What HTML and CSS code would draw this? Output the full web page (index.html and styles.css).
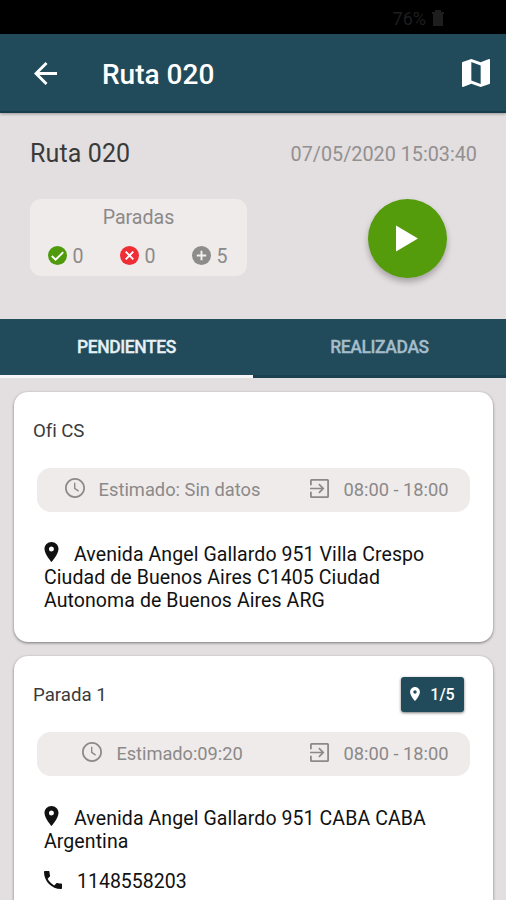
FILE: index.html
```html
<!DOCTYPE html>
<html lang="es">
<head>
<meta charset="utf-8">
<title>Ruta 020</title>
<link rel="stylesheet" href="styles.css">
</head>
<body>
<svg class="sprite" aria-hidden="true">
  <symbol id="pin" viewBox="5 2 14 20"><path fill-rule="evenodd" d="M12 2C8.13 2 5 5.13 5 9c0 5.25 7 13 7 13s7-7.750 7-13c0-3.870-3.130-7-7-7zm0 9.500a2.500 2.500 0 1 1 0-5 2.500 2.500 0 0 1 0 5z"/></symbol>
  <symbol id="clock" viewBox="2 2 20 20"><path d="M11.990 2C6.470 2 2 6.480 2 12s4.470 10 9.990 10C17.520 22 22 17.520 22 12S17.520 2 11.990 2zM12 20.300a8.300 8.300 0 1 1 0-16.600 8.300 8.300 0 0 1 0 16.600zm.4-13.500H11v6l4.200 2.900.8-1.150-3.600-2.500z"/></symbol>
  <symbol id="enter" viewBox="3 3 18 18"><path d="M10.900 15.600L12 16.700l4.700-4.700L12 7.300l-1.100 1.100 2.800 2.800H3v1.600h10.700zM19.500 3h-15A1.500 1.500 0 0 0 3 4.500V9h1.700V4.700h14.600v14.600H4.700V15H3v4.500A1.500 1.500 0 0 0 4.500 21h15a1.500 1.500 0 0 0 1.500-1.500v-15A1.500 1.500 0 0 0 19.500 3z"/></symbol>
</svg>

<div class="status"><span>76%</span><svg width="14" height="18" viewBox="0 0 14 18"><path d="M4 1h6v2h3v2h-1v12H2V5H1V3h3z"/></svg></div>

<header class="appbar">
  <svg class="back" viewBox="4 4 16 16"><path d="M20 11H7.830l5.590-5.590L12 4l-8 8 8 8 1.410-1.410L7.830 13H20v-2z"/></svg>
  <h1>Ruta 020</h1>
  <svg class="map" viewBox="3 3 18 18"><path d="M20.500 3l-.160.030L15 5.100 9 3 3.360 4.900c-.210.070-.360.250-.360.480V20.500c0 .280.220.500.500.500l.160-.030L9 18.900l6 2.100 5.640-1.900c.210-.070.360-.250.360-.480V3.500c0-.280-.220-.500-.500-.500zM15 19l-6-2.110V5l6 2.110V19z"/></svg>
</header>

<section class="summary">
  <div class="summary-head">
    <h2>Ruta 020</h2>
    <time>07/05/2020 15:03:40</time>
  </div>
  <div class="summary-body">
    <div class="stops">
      <div class="stops-title">Paradas</div>
      <div class="counts">
        <span><svg viewBox="0 0 20 20"><circle cx="10" cy="10" r="10" fill="#4f9b0b"/><path d="M4 10.500l4 4 8-8" stroke="#fff" stroke-width="2" fill="none"/></svg>0</span>
        <span><svg viewBox="0 0 20 20"><circle cx="10" cy="10" r="10" fill="#f02c34"/><path d="M6 6l8 8M14 6l-8 8" stroke="#fff" stroke-width="2" fill="none"/></svg>0</span>
        <span><svg viewBox="0 0 20 20"><circle cx="10" cy="10" r="10" fill="#8d8b8b"/><path d="M10 5v10M5 10h10" stroke="#f3f1f0" stroke-width="2" fill="none"/></svg>5</span>
      </div>
    </div>
    <div class="play"><svg viewBox="0 0 22 26"><path d="M0 0l22 13L0 26z"/></svg></div>
  </div>
</section>

<nav class="tabs">
  <div class="tab active">PENDIENTES</div>
  <div class="tab">REALIZADAS</div>
</nav>

<main class="list">
  <article class="card first">
    <div class="card-head"><h3 class="office">Ofi CS</h3></div>
    <div class="times">
      <div><svg class="clock"><use href="#clock"/></svg><span class="no-data">Estimado: Sin datos</span></div>
      <div><svg class="enter"><use href="#enter"/></svg><span class="hours">08:00 - 18:00</span></div>
    </div>
    <p class="address"><svg class="pin"><use href="#pin"/></svg>Avenida Angel Gallardo 951 Villa Crespo<br>Ciudad de Buenos Aires C1405 Ciudad<br>Autonoma de Buenos Aires ARG</p>
  </article>

  <article class="card second">
    <div class="card-head"><h3>Parada 1</h3><div class="badge"><svg><use href="#pin"/></svg>1/5</div></div>
    <div class="times">
      <div><svg class="clock"><use href="#clock"/></svg><span class="eta">Estimado:09:20</span></div>
      <div><svg class="enter"><use href="#enter"/></svg><span class="hours">08:00 - 18:00</span></div>
    </div>
    <p class="address"><svg class="pin"><use href="#pin"/></svg>Avenida Angel Gallardo 951 CABA CABA<br>Argentina</p>
    <p class="phone"><svg viewBox="3 3 18 18"><path d="M6.620 10.790c1.440 2.830 3.760 5.140 6.590 6.590l2.200-2.200c.270-.270.670-.360 1.020-.240 1.120.370 2.330.570 3.570.570.550 0 1 .450 1 1V20c0 .550-.450 1-1 1-9.390 0-17-7.610-17-17 0-.550.450-1 1-1h3.500c.550 0 1 .450 1 1 0 1.250.200 2.450.570 3.570.110.350.030.740-.250 1.020l-2.200 2.200z"/></svg>1148558203</p>
  </article>
</main>
</body>
</html>
```
FILE: styles.css
```css
* { box-sizing: border-box; }
body { margin: 0; width: 506px; height: 900px; overflow: hidden; display: flex; flex-direction: column; background: #e3dedf; font-family: Roboto, sans-serif; color: #111; }
h1, h2, h3, p { margin: 0; font-weight: 400; }
svg { display: block; fill: currentColor; flex: none; }
.sprite { position: absolute; width: 0; height: 0; }

.status { flex: none; height: 34px; background: #000; color: #1e1e1e; display: flex; align-items: center; justify-content: flex-end; gap: 5px; padding: 2px 61px 0 0; font-size: 18px; }
.appbar { flex: none; height: 79px; background: #214b5b; border-bottom: 2px solid #173b4d; color: #fff; display: flex; align-items: center; padding: 2px 16px 0 34px; box-shadow: 0 1px 3px #0005; }
.back { width: 23px; height: 23px; }
.appbar h1 { font-size: 28px; font-weight: 500; margin-left: 45px; padding-top: 2px; flex: 1; }
.map { width: 28px; height: 28px; margin-top: -1px; }

.summary { flex: none; height: 206px; padding: 22px 29px 0 30px; }
.summary-head { display: flex; justify-content: space-between; align-items: center; height: 36px; color: #3a3a3a; }
.summary-head h2 { font-size: 25px; letter-spacing: 0.12px; }
.summary-head time { font-size: 19.800px; color: #929091; padding-top: 3px; }
.summary-body { display: flex; justify-content: space-between; margin-top: 28px; padding-right: 30px; }
.stops { width: 217px; height: 77px; border-radius: 11px; background: #eeebea; color: #8c8989; font-size: 19.600px; }
.stops-title { text-align: center; line-height: 24px; margin-top: 7px; }
.counts { display: grid; grid-template-columns: repeat(3, 72px); margin-top: 15px; }
.counts span { display: flex; align-items: center; justify-content: center; gap: 5px; line-height: 24px; }
.counts svg { width: 19px; height: 19px; margin-top: -4px; }
.play { width: 79px; height: 79px; border-radius: 50%; background: #559c0c; color: #fff; box-shadow: 0 4px 6px #0004; display: flex; align-items: center; justify-content: center; }
.play svg { width: 22px; height: 27px; margin-left: -2px; }

.tabs { flex: none; height: 59px; display: flex; background: #214b5b; }
.tab { flex: 1; text-align: center; font-size: 17.500px; font-weight: 500; letter-spacing: -0.400px; line-height: 56px; color: #a5bdca; border-bottom: 3px solid #1b4051; -webkit-text-stroke: 0.300px; }
.tab.active { color: #e6f1f5; border-bottom-color: #f5f5f8; }

.list { flex: 1; min-height: 0; padding: 14px 13px 0 14px; display: flex; flex-direction: column; gap: 14px; }
.card { flex: none; background: #fff; border-radius: 14px; box-shadow: 0 1px 3px #0007; padding: 20px 23px 0; }
.first { height: 250px; }
.second { height: 244px; border-radius: 14px 14px 0 0; }
.card-head { display: flex; align-items: center; justify-content: space-between; height: 35px; padding: 0 6px 0 0; margin-left: -4px; }
.card h3 { font-size: 18.700px; color: #3b3b3b; padding-top: 2px; }
.card .office { letter-spacing: -0.100px; }
.badge { display: flex; align-items: center; justify-content: center; gap: 10px; width: 63px; height: 35px; margin-top: 1px; background: #214b5b; border-radius: 3px; color: #fff; font-size: 16px; font-weight: 500; box-shadow: 0 1px 3px #0008; }
.badge svg { width: 10px; height: 14px; }
.times { display: grid; grid-template-columns: 217px 217px; height: 44px; padding-left: 17px; margin-top: 21px; background: #eeebea; border-radius: 14px; color: #8c8989; font-size: 18.300px; }
.times div { display: flex; align-items: center; justify-content: center; gap: 14px; white-space: nowrap; }
.times span { margin-top: -1px; }
.times svg { margin-top: -4px; }
.clock { width: 20px; height: 20px; }
.enter { width: 19px; height: 19px; }
.eta { letter-spacing: -0.050px; }
.address { margin: 30px 0 0 7px; font-size: 19.500px; letter-spacing: 0.085px; line-height: 23px; white-space: nowrap; }
.pin { display: inline-block; width: 15px; height: 20px; margin-right: 15px; vertical-align: -1px; }
.phone { display: flex; align-items: center; gap: 15px; margin: 17px 0 0 7px; font-size: 19.500px; line-height: 23px; }
.phone svg { width: 18px; height: 18px; margin-top: -4px; }
```
